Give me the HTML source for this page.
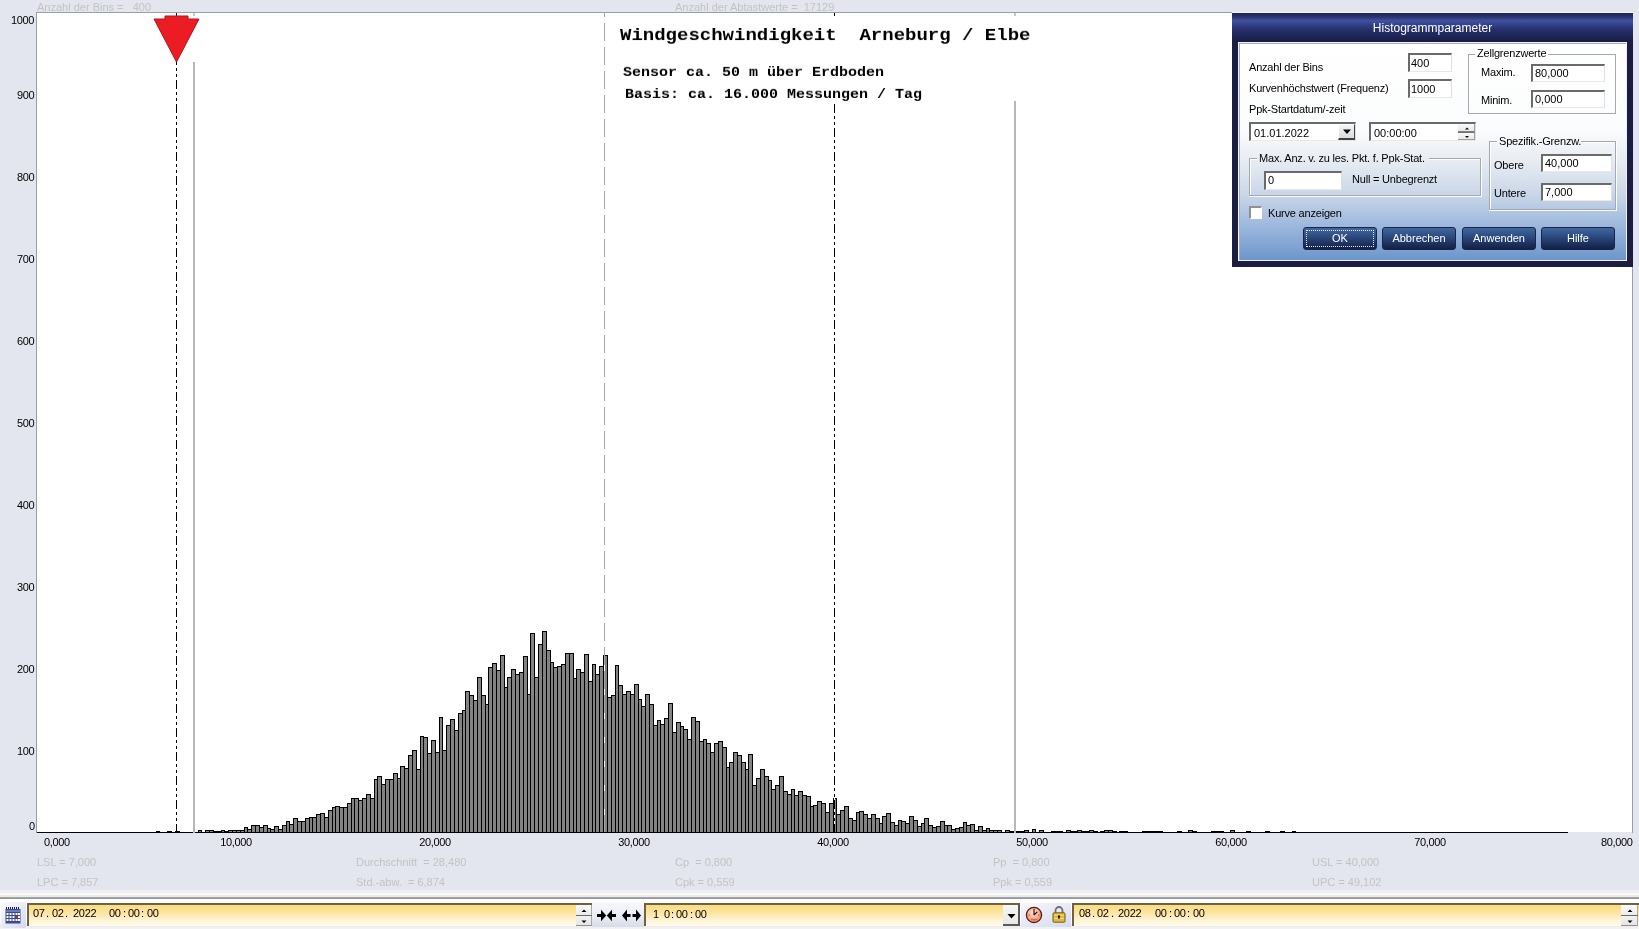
<!DOCTYPE html>
<html><head><meta charset="utf-8"><style>
html,body{margin:0;padding:0}
body{width:1639px;height:929px;position:relative;overflow:hidden;background:#e3e6ee;font-family:"Liberation Sans",sans-serif}
.t{position:absolute;line-height:1;white-space:pre;will-change:transform}
svg{position:absolute;left:0;top:0}
</style></head><body>
<svg width="1639" height="929" viewBox="0 0 1639 929" shape-rendering="crispEdges"><rect x="37" y="13" width="1595" height="819" fill="#fff"/><rect x="36" y="12" width="1" height="821" fill="#9a9ea6"/><rect x="36" y="12" width="1597" height="1" fill="#9a9ea6"/><rect x="1632" y="12" width="1" height="821" fill="#9a9ea6"/><path fill="#000" d="M156 831h4v1h-4zM167 831h5v1h-5zM175 831h5v1h-5zM198 830h4v2h-4zM205 830h5v2h-5zM209 830h5v2h-5zM213 831h5v1h-5zM217 831h5v1h-5zM221 830h4v2h-4zM224 831h5v1h-5zM228 830h5v2h-5zM232 830h5v2h-5zM236 830h5v2h-5zM240 830h5v2h-5zM244 827h4v5h-4zM247 829h5v3h-5zM251 825h5v7h-5zM255 825h5v7h-5zM259 827h5v5h-5zM263 825h5v7h-5zM267 828h4v4h-4zM270 829h5v3h-5zM274 826h5v6h-5zM278 829h5v3h-5zM282 825h5v7h-5zM286 821h4v11h-4zM289 824h5v8h-5zM293 818h5v14h-5zM297 821h5v11h-5zM301 821h5v11h-5zM305 818h5v14h-5zM309 817h4v15h-4zM312 817h5v15h-5zM316 814h5v18h-5zM320 813h5v19h-5zM324 817h5v15h-5zM328 810h5v22h-5zM332 807h4v25h-4zM335 806h5v26h-5zM339 807h5v25h-5zM343 807h5v25h-5zM347 803h5v29h-5zM351 798h4v34h-4zM354 798h5v34h-5zM358 800h5v32h-5zM362 798h5v34h-5zM366 794h5v38h-5zM370 798h5v34h-5zM374 779h4v53h-4zM377 776h5v56h-5zM381 784h5v48h-5zM385 779h5v53h-5zM389 779h5v53h-5zM393 773h5v59h-5zM397 778h4v54h-4zM400 766h5v66h-5zM404 768h5v64h-5zM408 755h5v77h-5zM412 750h5v82h-5zM416 769h5v63h-5zM420 736h4v96h-4zM423 737h5v95h-5zM427 753h5v79h-5zM431 740h5v92h-5zM435 752h5v80h-5zM439 717h4v115h-4zM442 750h5v82h-5zM446 725h5v107h-5zM450 719h5v113h-5zM454 730h5v102h-5zM458 713h5v119h-5zM462 710h4v122h-4zM465 691h5v141h-5zM469 695h5v137h-5zM473 700h5v132h-5zM477 677h5v155h-5zM481 695h5v137h-5zM485 704h4v128h-4zM488 667h5v165h-5zM492 663h5v169h-5zM496 670h5v162h-5zM500 655h5v177h-5zM504 687h4v145h-4zM507 677h5v155h-5zM511 669h5v163h-5zM515 674h5v158h-5zM519 672h5v160h-5zM523 656h5v176h-5zM527 694h4v138h-4zM530 633h5v199h-5zM534 677h5v155h-5zM538 644h5v188h-5zM542 631h5v201h-5zM546 650h5v182h-5zM550 662h4v170h-4zM553 667h5v165h-5zM557 666h5v166h-5zM561 664h5v168h-5zM565 653h5v179h-5zM569 653h5v179h-5zM573 678h4v154h-4zM576 669h5v163h-5zM580 672h5v160h-5zM584 654h5v178h-5zM588 681h5v151h-5zM592 664h4v168h-4zM595 674h5v158h-5zM599 666h5v166h-5zM603 655h5v177h-5zM607 697h5v135h-5zM611 695h5v137h-5zM615 665h4v167h-4zM618 685h5v147h-5zM622 694h5v138h-5zM626 691h5v141h-5zM630 694h5v138h-5zM634 684h5v148h-5zM638 699h4v133h-4zM641 706h5v126h-5zM645 694h5v138h-5zM649 704h5v128h-5zM653 725h5v107h-5zM657 720h4v112h-4zM660 724h5v108h-5zM664 718h5v114h-5zM668 703h5v129h-5zM672 732h5v100h-5zM676 722h5v110h-5zM680 726h4v106h-4zM683 729h5v103h-5zM687 739h5v93h-5zM691 717h5v115h-5zM695 721h5v111h-5zM699 741h5v91h-5zM703 739h4v93h-4zM706 743h5v89h-5zM710 752h5v80h-5zM714 743h5v89h-5zM718 741h5v91h-5zM722 747h5v85h-5zM726 767h4v65h-4zM729 762h5v70h-5zM733 752h5v80h-5zM737 755h5v77h-5zM741 762h5v70h-5zM745 769h4v63h-4zM748 754h5v78h-5zM752 785h5v47h-5zM756 778h5v54h-5zM760 769h5v63h-5zM764 776h5v56h-5zM768 780h4v52h-4zM771 789h5v43h-5zM775 785h5v47h-5zM779 776h5v56h-5zM783 791h5v41h-5zM787 794h5v38h-5zM791 789h4v43h-4zM794 795h5v37h-5zM798 791h5v41h-5zM802 795h5v37h-5zM806 796h5v36h-5zM810 806h4v26h-4zM813 805h5v27h-5zM817 801h5v31h-5zM821 803h5v29h-5zM825 812h5v20h-5zM829 803h5v29h-5zM833 798h4v34h-4zM836 814h5v18h-5zM840 810h5v22h-5zM844 806h5v26h-5zM848 818h5v14h-5zM852 820h5v12h-5zM856 812h4v20h-4zM859 811h5v21h-5zM863 814h5v18h-5zM867 818h5v14h-5zM871 814h5v18h-5zM875 818h5v14h-5zM879 823h4v9h-4zM882 816h5v16h-5zM886 813h5v19h-5zM890 822h5v10h-5zM894 825h5v7h-5zM898 820h4v12h-4zM901 821h5v11h-5zM905 823h5v9h-5zM909 816h5v16h-5zM913 820h5v12h-5zM917 826h5v6h-5zM921 823h4v9h-4zM924 818h5v14h-5zM928 825h5v7h-5zM932 827h5v5h-5zM936 826h5v6h-5zM940 821h5v11h-5zM944 825h4v7h-4zM947 825h5v7h-5zM951 829h5v3h-5zM955 828h5v4h-5zM959 827h5v5h-5zM963 822h4v10h-4zM966 825h5v7h-5zM970 824h5v8h-5zM974 830h5v2h-5zM978 826h5v6h-5zM982 830h5v2h-5zM986 828h4v4h-4zM989 830h5v2h-5zM993 830h5v2h-5zM997 830h5v2h-5zM1005 830h5v2h-5zM1009 831h4v1h-4zM1012 831h5v1h-5zM1016 831h5v1h-5zM1020 831h5v1h-5zM1024 830h5v2h-5zM1032 829h4v3h-4zM1039 830h5v2h-5zM1051 831h4v1h-4zM1054 831h5v1h-5zM1058 831h5v1h-5zM1066 830h5v2h-5zM1070 831h5v1h-5zM1074 831h4v1h-4zM1077 830h5v2h-5zM1081 831h5v1h-5zM1085 831h5v1h-5zM1089 830h5v2h-5zM1093 831h5v1h-5zM1100 831h5v1h-5zM1104 830h5v2h-5zM1108 830h5v2h-5zM1112 831h5v1h-5zM1119 831h5v1h-5zM1123 831h5v1h-5zM1142 831h5v1h-5zM1146 831h5v1h-5zM1150 831h5v1h-5zM1154 831h5v1h-5zM1158 831h5v1h-5zM1177 831h5v1h-5zM1188 830h5v2h-5zM1192 831h5v1h-5zM1211 831h5v1h-5zM1215 831h5v1h-5zM1219 831h5v1h-5zM1230 830h5v2h-5zM1246 831h5v1h-5zM1265 831h5v1h-5zM1280 831h5v1h-5zM1292 831h4v1h-4z"/><path fill="#838383" d="M199 831h2v1h-2zM206 831h3v1h-3zM210 831h3v1h-3zM222 831h2v1h-2zM229 831h3v1h-3zM233 831h3v1h-3zM237 831h3v1h-3zM241 831h3v1h-3zM245 828h2v4h-2zM248 830h3v2h-3zM252 826h3v6h-3zM256 826h3v6h-3zM260 828h3v4h-3zM264 826h3v6h-3zM268 829h2v3h-2zM271 830h3v2h-3zM275 827h3v5h-3zM279 830h3v2h-3zM283 826h3v6h-3zM287 822h2v10h-2zM290 825h3v7h-3zM294 819h3v13h-3zM298 822h3v10h-3zM302 822h3v10h-3zM306 819h3v13h-3zM310 818h2v14h-2zM313 818h3v14h-3zM317 815h3v17h-3zM321 814h3v18h-3zM325 818h3v14h-3zM329 811h3v21h-3zM333 808h2v24h-2zM336 807h3v25h-3zM340 808h3v24h-3zM344 808h3v24h-3zM348 804h3v28h-3zM352 799h2v33h-2zM355 799h3v33h-3zM359 801h3v31h-3zM363 799h3v33h-3zM367 795h3v37h-3zM371 799h3v33h-3zM375 780h2v52h-2zM378 777h3v55h-3zM382 785h3v47h-3zM386 780h3v52h-3zM390 780h3v52h-3zM394 774h3v58h-3zM398 779h2v53h-2zM401 767h3v65h-3zM405 769h3v63h-3zM409 756h3v76h-3zM413 751h3v81h-3zM417 770h3v62h-3zM421 737h2v95h-2zM424 738h3v94h-3zM428 754h3v78h-3zM432 741h3v91h-3zM436 753h3v79h-3zM440 718h2v114h-2zM443 751h3v81h-3zM447 726h3v106h-3zM451 720h3v112h-3zM455 731h3v101h-3zM459 714h3v118h-3zM463 711h2v121h-2zM466 692h3v140h-3zM470 696h3v136h-3zM474 701h3v131h-3zM478 678h3v154h-3zM482 696h3v136h-3zM486 705h2v127h-2zM489 668h3v164h-3zM493 664h3v168h-3zM497 671h3v161h-3zM501 656h3v176h-3zM505 688h2v144h-2zM508 678h3v154h-3zM512 670h3v162h-3zM516 675h3v157h-3zM520 673h3v159h-3zM524 657h3v175h-3zM528 695h2v137h-2zM531 634h3v198h-3zM535 678h3v154h-3zM539 645h3v187h-3zM543 632h3v200h-3zM547 651h3v181h-3zM551 663h2v169h-2zM554 668h3v164h-3zM558 667h3v165h-3zM562 665h3v167h-3zM566 654h3v178h-3zM570 654h3v178h-3zM574 679h2v153h-2zM577 670h3v162h-3zM581 673h3v159h-3zM585 655h3v177h-3zM589 682h3v150h-3zM593 665h2v167h-2zM596 675h3v157h-3zM600 667h3v165h-3zM604 656h3v176h-3zM608 698h3v134h-3zM612 696h3v136h-3zM616 666h2v166h-2zM619 686h3v146h-3zM623 695h3v137h-3zM627 692h3v140h-3zM631 695h3v137h-3zM635 685h3v147h-3zM639 700h2v132h-2zM642 707h3v125h-3zM646 695h3v137h-3zM650 705h3v127h-3zM654 726h3v106h-3zM658 721h2v111h-2zM661 725h3v107h-3zM665 719h3v113h-3zM669 704h3v128h-3zM673 733h3v99h-3zM677 723h3v109h-3zM681 727h2v105h-2zM684 730h3v102h-3zM688 740h3v92h-3zM692 718h3v114h-3zM696 722h3v110h-3zM700 742h3v90h-3zM704 740h2v92h-2zM707 744h3v88h-3zM711 753h3v79h-3zM715 744h3v88h-3zM719 742h3v90h-3zM723 748h3v84h-3zM727 768h2v64h-2zM730 763h3v69h-3zM734 753h3v79h-3zM738 756h3v76h-3zM742 763h3v69h-3zM746 770h2v62h-2zM749 755h3v77h-3zM753 786h3v46h-3zM757 779h3v53h-3zM761 770h3v62h-3zM765 777h3v55h-3zM769 781h2v51h-2zM772 790h3v42h-3zM776 786h3v46h-3zM780 777h3v55h-3zM784 792h3v40h-3zM788 795h3v37h-3zM792 790h2v42h-2zM795 796h3v36h-3zM799 792h3v40h-3zM803 796h3v36h-3zM807 797h3v35h-3zM811 807h2v25h-2zM814 806h3v26h-3zM818 802h3v30h-3zM822 804h3v28h-3zM826 813h3v19h-3zM830 804h3v28h-3zM834 799h2v33h-2zM837 815h3v17h-3zM841 811h3v21h-3zM845 807h3v25h-3zM849 819h3v13h-3zM853 821h3v11h-3zM857 813h2v19h-2zM860 812h3v20h-3zM864 815h3v17h-3zM868 819h3v13h-3zM872 815h3v17h-3zM876 819h3v13h-3zM880 824h2v8h-2zM883 817h3v15h-3zM887 814h3v18h-3zM891 823h3v9h-3zM895 826h3v6h-3zM899 821h2v11h-2zM902 822h3v10h-3zM906 824h3v8h-3zM910 817h3v15h-3zM914 821h3v11h-3zM918 827h3v5h-3zM922 824h2v8h-2zM925 819h3v13h-3zM929 826h3v6h-3zM933 828h3v4h-3zM937 827h3v5h-3zM941 822h3v10h-3zM945 826h2v6h-2zM948 826h3v6h-3zM952 830h3v2h-3zM956 829h3v3h-3zM960 828h3v4h-3zM964 823h2v9h-2zM967 826h3v6h-3zM971 825h3v7h-3zM975 831h3v1h-3zM979 827h3v5h-3zM983 831h3v1h-3zM987 829h2v3h-2zM990 831h3v1h-3zM994 831h3v1h-3zM998 831h3v1h-3zM1006 831h3v1h-3zM1025 831h3v1h-3zM1033 830h2v2h-2zM1040 831h3v1h-3zM1067 831h3v1h-3zM1078 831h3v1h-3zM1090 831h3v1h-3zM1105 831h3v1h-3zM1109 831h3v1h-3zM1189 831h3v1h-3zM1231 831h3v1h-3z"/><rect x="37" y="832" width="1531" height="1" fill="#000"/><rect x="604" y="13" width="1" height="819" fill="#fff"/><line x1="604.5" y1="13" x2="604.5" y2="832" stroke="#a8a8a8" stroke-width="1" stroke-dasharray="18 6" stroke-dashoffset="-10"/><rect x="193" y="62" width="2" height="771" fill="#b8b8b8"/><rect x="193" y="13" width="2" height="3" fill="#c8c8c8"/><rect x="1014" y="101" width="2" height="732" fill="#b8b8b8"/><rect x="1014" y="13" width="2" height="3" fill="#c8c8c8"/><rect x="176" y="62" width="1" height="770" fill="#fff"/><line x1="176.5" y1="13" x2="176.5" y2="832" stroke="#000" stroke-width="1" stroke-dasharray="9 3 3 3 3 3" stroke-dashoffset="5"/><rect x="834" y="104" width="1" height="728" fill="#fff"/><line x1="834.5" y1="104" x2="834.5" y2="832" stroke="#000" stroke-width="1" stroke-dasharray="9 3 3 3 3 3" stroke-dashoffset="-96"/><rect x="834" y="13" width="1" height="3" fill="#000"/><path d="M165 16H188V19H199L176.5 62L154 19H165Z" fill="#ec1c24" stroke="#b41418" stroke-width="1" shape-rendering="geometricPrecision"/></svg>
<div class="t" style="left:37px;top:1.69px;font-size:11px;color:#c3c3c3;font-family:'Liberation Sans',sans-serif;font-weight:normal;">Anzahl der Bins =   400</div>
<div class="t" style="left:675px;top:1.69px;font-size:11px;color:#c3c3c3;font-family:'Liberation Sans',sans-serif;font-weight:normal;">Anzahl der Abtastwerte =  17129</div>
<div class="t" style="right:1604.5px;top:820.69px;font-size:11px;color:#000;font-family:'Liberation Sans',sans-serif;font-weight:normal;text-align:right;letter-spacing:-0.35px">0</div>
<div class="t" style="right:1604.5px;top:745.69px;font-size:11px;color:#000;font-family:'Liberation Sans',sans-serif;font-weight:normal;text-align:right;letter-spacing:-0.35px">100</div>
<div class="t" style="right:1604.5px;top:663.69px;font-size:11px;color:#000;font-family:'Liberation Sans',sans-serif;font-weight:normal;text-align:right;letter-spacing:-0.35px">200</div>
<div class="t" style="right:1604.5px;top:581.69px;font-size:11px;color:#000;font-family:'Liberation Sans',sans-serif;font-weight:normal;text-align:right;letter-spacing:-0.35px">300</div>
<div class="t" style="right:1604.5px;top:499.69px;font-size:11px;color:#000;font-family:'Liberation Sans',sans-serif;font-weight:normal;text-align:right;letter-spacing:-0.35px">400</div>
<div class="t" style="right:1604.5px;top:417.69px;font-size:11px;color:#000;font-family:'Liberation Sans',sans-serif;font-weight:normal;text-align:right;letter-spacing:-0.35px">500</div>
<div class="t" style="right:1604.5px;top:335.69px;font-size:11px;color:#000;font-family:'Liberation Sans',sans-serif;font-weight:normal;text-align:right;letter-spacing:-0.35px">600</div>
<div class="t" style="right:1604.5px;top:253.69px;font-size:11px;color:#000;font-family:'Liberation Sans',sans-serif;font-weight:normal;text-align:right;letter-spacing:-0.35px">700</div>
<div class="t" style="right:1604.5px;top:171.69px;font-size:11px;color:#000;font-family:'Liberation Sans',sans-serif;font-weight:normal;text-align:right;letter-spacing:-0.35px">800</div>
<div class="t" style="right:1604.5px;top:89.69px;font-size:11px;color:#000;font-family:'Liberation Sans',sans-serif;font-weight:normal;text-align:right;letter-spacing:-0.35px">900</div>
<div class="t" style="right:1604.5px;top:14.69px;font-size:11px;color:#000;font-family:'Liberation Sans',sans-serif;font-weight:normal;text-align:right;letter-spacing:-0.35px">1000</div>
<div class="t" style="left:43.5px;top:836.69px;font-size:11px;color:#000;font-family:'Liberation Sans',sans-serif;font-weight:normal;letter-spacing:-0.35px">0,000</div>
<div class="t" style="left:135.79999999999998px;width:200px;top:836.69px;font-size:11px;color:#000;font-family:'Liberation Sans',sans-serif;font-weight:normal;text-align:center;letter-spacing:-0.35px">10,000</div>
<div class="t" style="left:334.8px;width:200px;top:836.69px;font-size:11px;color:#000;font-family:'Liberation Sans',sans-serif;font-weight:normal;text-align:center;letter-spacing:-0.35px">20,000</div>
<div class="t" style="left:533.8000000000001px;width:200px;top:836.69px;font-size:11px;color:#000;font-family:'Liberation Sans',sans-serif;font-weight:normal;text-align:center;letter-spacing:-0.35px">30,000</div>
<div class="t" style="left:732.8000000000001px;width:200px;top:836.69px;font-size:11px;color:#000;font-family:'Liberation Sans',sans-serif;font-weight:normal;text-align:center;letter-spacing:-0.35px">40,000</div>
<div class="t" style="left:931.8px;width:200px;top:836.69px;font-size:11px;color:#000;font-family:'Liberation Sans',sans-serif;font-weight:normal;text-align:center;letter-spacing:-0.35px">50,000</div>
<div class="t" style="left:1130.8px;width:200px;top:836.69px;font-size:11px;color:#000;font-family:'Liberation Sans',sans-serif;font-weight:normal;text-align:center;letter-spacing:-0.35px">60,000</div>
<div class="t" style="left:1329.8px;width:200px;top:836.69px;font-size:11px;color:#000;font-family:'Liberation Sans',sans-serif;font-weight:normal;text-align:center;letter-spacing:-0.35px">70,000</div>
<div class="t" style="right:6.2000000000000455px;top:836.69px;font-size:11px;color:#000;font-family:'Liberation Sans',sans-serif;font-weight:normal;text-align:right;letter-spacing:-0.35px">80,000</div>
<div class="t" style="left:37px;top:856.69px;font-size:11px;color:#c3c3c3;font-family:'Liberation Sans',sans-serif;font-weight:normal;">LSL = 7,000</div>
<div class="t" style="left:37px;top:876.69px;font-size:11px;color:#c3c3c3;font-family:'Liberation Sans',sans-serif;font-weight:normal;">LPC = 7,857</div>
<div class="t" style="left:356px;top:856.69px;font-size:11px;color:#c3c3c3;font-family:'Liberation Sans',sans-serif;font-weight:normal;">Durchschnitt  = 28,480</div>
<div class="t" style="left:356px;top:876.69px;font-size:11px;color:#c3c3c3;font-family:'Liberation Sans',sans-serif;font-weight:normal;">Std.-abw.  = 6,874</div>
<div class="t" style="left:675px;top:856.69px;font-size:11px;color:#c3c3c3;font-family:'Liberation Sans',sans-serif;font-weight:normal;">Cp  = 0,800</div>
<div class="t" style="left:675px;top:876.69px;font-size:11px;color:#c3c3c3;font-family:'Liberation Sans',sans-serif;font-weight:normal;">Cpk = 0,559</div>
<div class="t" style="left:993px;top:856.69px;font-size:11px;color:#c3c3c3;font-family:'Liberation Sans',sans-serif;font-weight:normal;">Pp  = 0,800</div>
<div class="t" style="left:993px;top:876.69px;font-size:11px;color:#c3c3c3;font-family:'Liberation Sans',sans-serif;font-weight:normal;">Ppk = 0,559</div>
<div class="t" style="left:1312px;top:856.69px;font-size:11px;color:#c3c3c3;font-family:'Liberation Sans',sans-serif;font-weight:normal;">USL = 40,000</div>
<div class="t" style="left:1312px;top:876.69px;font-size:11px;color:#c3c3c3;font-family:'Liberation Sans',sans-serif;font-weight:normal;">UPC = 49,102</div>
<div class="t" style="left:619.5px;top:26.24px;font-size:19px;color:#000;font-family:'Liberation Mono',sans-serif;font-weight:bold;transform:scaleY(0.93);transform-origin:0 14.56px">Windgeschwindigkeit  Arneburg / Elbe</div>
<div class="t" style="left:623px;top:65.00px;font-size:15px;color:#000;font-family:'Liberation Mono',sans-serif;font-weight:bold;transform:scaleY(0.92);transform-origin:0 11.5px">Sensor ca. 50 m über Erdboden</div>
<div class="t" style="left:625px;top:87.40px;font-size:15px;color:#000;font-family:'Liberation Mono',sans-serif;font-weight:bold;transform:scaleY(0.92);transform-origin:0 11.5px">Basis: ca. 16.000 Messungen / Tag</div>
<div style="position:absolute;left:1232px;top:12px;width:401px;height:1px;box-sizing:border-box;background:#f4f5f8"></div>
<div style="position:absolute;left:1232px;top:13px;width:401px;height:254px;box-sizing:border-box;background:#1b1d42"></div>
<div style="position:absolute;left:1232px;top:13px;width:401px;height:29px;box-sizing:border-box;background:linear-gradient(to bottom,#1c2350 0%,#2a3672 14%,#4252a0 27%,#33408a 40%,#252f68 60%,#1c2352 85%,#161b40 100%)"></div>
<div class="t" style="left:1232px;width:401px;text-align:center;top:21.84px;font-size:12px;color:#fff;">Histogrammparameter</div>
<div style="position:absolute;left:1238px;top:42px;width:389px;height:219px;box-sizing:border-box;background:linear-gradient(to bottom,#ffffff 0%,#fbfcfd 40%,#e6ebf2 55%,#c9d6e8 70%,#9ab6dc 85%,#6d96cc 100%);border:1px solid #f0f2f8;box-shadow:inset 1px 1px 0 #a8acb8"></div>
<div class="t" style="left:1249px;top:61.69px;font-size:11px;color:#000;transform:scaleY(1.07);transform-origin:0 9.31px;letter-spacing:-0.2px;">Anzahl der Bins</div>
<div class="t" style="left:1249px;top:83.09px;font-size:11px;color:#000;transform:scaleY(1.07);transform-origin:0 9.31px;letter-spacing:-0.2px;">Kurvenhöchstwert (Frequenz)</div>
<div class="t" style="left:1249px;top:103.69px;font-size:11px;color:#000;transform:scaleY(1.07);transform-origin:0 9.31px;letter-spacing:-0.2px;">Ppk-Startdatum/-zeit</div>
<div style="position:absolute;left:1408px;top:53px;width:44px;height:19px;box-sizing:border-box;background:#fff;border-top:2px solid #6a6a6a;border-left:2px solid #6a6a6a;border-right:1px solid #e0e0e0;border-bottom:1px solid #e8e8e8"></div>
<div class="t" style="left:1411px;top:58.09px;font-size:11px;color:#000;transform:scaleY(1.07);transform-origin:0 9.31px;">400</div>
<div style="position:absolute;left:1408px;top:79px;width:44px;height:19px;box-sizing:border-box;background:#fff;border-top:2px solid #6a6a6a;border-left:2px solid #6a6a6a;border-right:1px solid #e0e0e0;border-bottom:1px solid #e8e8e8"></div>
<div class="t" style="left:1411px;top:83.99px;font-size:11px;color:#000;transform:scaleY(1.07);transform-origin:0 9.31px;">1000</div>
<div style="position:absolute;left:1468px;top:54px;width:7px;height:1px;box-sizing:border-box;background:#a4a8b0"></div>
<div style="position:absolute;left:1469px;top:55px;width:6px;height:1px;box-sizing:border-box;background:rgba(255,255,255,0.9)"></div>
<div style="position:absolute;left:1548px;top:54px;width:68px;height:1px;box-sizing:border-box;background:#a4a8b0"></div>
<div style="position:absolute;left:1548px;top:55px;width:68px;height:1px;box-sizing:border-box;background:rgba(255,255,255,0.9)"></div>
<div style="position:absolute;left:1468px;top:54px;width:1px;height:60px;box-sizing:border-box;background:#a4a8b0"></div>
<div style="position:absolute;left:1469px;top:55px;width:1px;height:58px;box-sizing:border-box;background:rgba(255,255,255,0.9)"></div>
<div style="position:absolute;left:1615px;top:54px;width:1px;height:60px;box-sizing:border-box;background:#a4a8b0"></div>
<div style="position:absolute;left:1616px;top:54px;width:1px;height:61px;box-sizing:border-box;background:rgba(255,255,255,0.9)"></div>
<div style="position:absolute;left:1468px;top:113px;width:148px;height:1px;box-sizing:border-box;background:#a4a8b0"></div>
<div style="position:absolute;left:1468px;top:114px;width:149px;height:1px;box-sizing:border-box;background:rgba(255,255,255,0.9)"></div>
<div class="t" style="left:1476.5px;top:48.49px;font-size:11px;color:#000;transform:scaleY(1.07);transform-origin:0 9.31px;letter-spacing:-0.2px;">Zellgrenzwerte</div>
<div class="t" style="left:1481px;top:67.39px;font-size:11px;color:#000;transform:scaleY(1.07);transform-origin:0 9.31px;letter-spacing:-0.2px;">Maxim.</div>
<div style="position:absolute;left:1531px;top:64px;width:74px;height:18px;box-sizing:border-box;background:#fff;border-top:2px solid #6a6a6a;border-left:2px solid #6a6a6a;border-right:1px solid #e0e0e0;border-bottom:1px solid #e8e8e8"></div>
<div class="t" style="left:1534.5px;top:67.89px;font-size:11px;color:#000;transform:scaleY(1.07);transform-origin:0 9.31px;">80,000</div>
<div class="t" style="left:1481px;top:95.19px;font-size:11px;color:#000;transform:scaleY(1.07);transform-origin:0 9.31px;letter-spacing:-0.2px;">Minim.</div>
<div style="position:absolute;left:1531px;top:90px;width:74px;height:18px;box-sizing:border-box;background:#fff;border-top:2px solid #6a6a6a;border-left:2px solid #6a6a6a;border-right:1px solid #e0e0e0;border-bottom:1px solid #e8e8e8"></div>
<div class="t" style="left:1534.5px;top:93.69px;font-size:11px;color:#000;transform:scaleY(1.07);transform-origin:0 9.31px;">0,000</div>
<div style="position:absolute;left:1249px;top:122px;width:107px;height:19px;box-sizing:border-box;background:#fff;border-top:2px solid #6a6a6a;border-left:2px solid #6a6a6a;border-right:1px solid #e0e0e0;border-bottom:1px solid #e8e8e8"></div>
<div style="position:absolute;left:1338px;top:124px;width:17px;height:16px;box-sizing:border-box;background:linear-gradient(#f4f4f4,#dcdcdc);border-right:1px solid #404040;border-bottom:2px solid #404040;border-left:1px solid #fff;border-top:1px solid #fff"></div>
<svg style="position:absolute;left:1341px;top:128px" width="12" height="8"><path d="M2 1.5H10L6 6Z" fill="#000"/></svg>
<div class="t" style="left:1253.5px;top:128.19px;font-size:11px;color:#000;transform:scaleY(1.07);transform-origin:0 9.31px;">01.01.2022</div>
<div style="position:absolute;left:1369px;top:122px;width:107px;height:19px;box-sizing:border-box;background:#fff;border-top:2px solid #6a6a6a;border-left:2px solid #6a6a6a;border-right:1px solid #e0e0e0;border-bottom:1px solid #e8e8e8"></div>
<div class="t" style="left:1373.5px;top:128.19px;font-size:11px;color:#000;transform:scaleY(1.07);transform-origin:0 9.31px;">00:00:00</div>
<div style="position:absolute;left:1458px;top:124px;width:17px;height:8px;box-sizing:border-box;background:linear-gradient(#fafafa,#e8e8e8);border-bottom:1px solid #808080;border-right:1px solid #a0a0a0"></div>
<div style="position:absolute;left:1458px;top:132px;width:17px;height:8px;box-sizing:border-box;background:linear-gradient(#fafafa,#e8e8e8);border-bottom:1px solid #a0a0a0;border-right:1px solid #a0a0a0;border-top:1px solid #707070"></div>
<svg style="position:absolute;left:1463px;top:126px" width="8" height="14"><path d="M2 3.5H6L4 1.5Z M2 10H6L4 12Z" fill="#000"/></svg>
<div style="position:absolute;left:1489px;top:141px;width:8px;height:1px;box-sizing:border-box;background:#a4a8b0"></div>
<div style="position:absolute;left:1490px;top:142px;width:7px;height:1px;box-sizing:border-box;background:rgba(255,255,255,0.9)"></div>
<div style="position:absolute;left:1581px;top:141px;width:35px;height:1px;box-sizing:border-box;background:#a4a8b0"></div>
<div style="position:absolute;left:1581px;top:142px;width:35px;height:1px;box-sizing:border-box;background:rgba(255,255,255,0.9)"></div>
<div style="position:absolute;left:1489px;top:141px;width:1px;height:69px;box-sizing:border-box;background:#a4a8b0"></div>
<div style="position:absolute;left:1490px;top:142px;width:1px;height:67px;box-sizing:border-box;background:rgba(255,255,255,0.9)"></div>
<div style="position:absolute;left:1615px;top:141px;width:1px;height:69px;box-sizing:border-box;background:#a4a8b0"></div>
<div style="position:absolute;left:1616px;top:141px;width:1px;height:70px;box-sizing:border-box;background:rgba(255,255,255,0.9)"></div>
<div style="position:absolute;left:1489px;top:209px;width:127px;height:1px;box-sizing:border-box;background:#a4a8b0"></div>
<div style="position:absolute;left:1489px;top:210px;width:128px;height:1px;box-sizing:border-box;background:rgba(255,255,255,0.9)"></div>
<div class="t" style="left:1498.5px;top:136.09px;font-size:11px;color:#000;transform:scaleY(1.07);transform-origin:0 9.31px;letter-spacing:-0.2px;">Spezifik.-Grenzw.</div>
<div class="t" style="left:1493.5px;top:159.99px;font-size:11px;color:#000;transform:scaleY(1.07);transform-origin:0 9.31px;letter-spacing:-0.2px;">Obere</div>
<div style="position:absolute;left:1541px;top:154px;width:71px;height:18px;box-sizing:border-box;background:#fff;border-top:2px solid #6a6a6a;border-left:2px solid #6a6a6a;border-right:1px solid #e0e0e0;border-bottom:1px solid #e8e8e8"></div>
<div class="t" style="left:1545px;top:157.89px;font-size:11px;color:#000;transform:scaleY(1.07);transform-origin:0 9.31px;">40,000</div>
<div class="t" style="left:1493.5px;top:188.39px;font-size:11px;color:#000;transform:scaleY(1.07);transform-origin:0 9.31px;letter-spacing:-0.2px;">Untere</div>
<div style="position:absolute;left:1541px;top:183px;width:71px;height:18px;box-sizing:border-box;background:#fff;border-top:2px solid #6a6a6a;border-left:2px solid #6a6a6a;border-right:1px solid #e0e0e0;border-bottom:1px solid #e8e8e8"></div>
<div class="t" style="left:1545px;top:186.69px;font-size:11px;color:#000;transform:scaleY(1.07);transform-origin:0 9.31px;">7,000</div>
<div style="position:absolute;left:1249px;top:158px;width:8px;height:1px;box-sizing:border-box;background:#a4a8b0"></div>
<div style="position:absolute;left:1250px;top:159px;width:7px;height:1px;box-sizing:border-box;background:rgba(255,255,255,0.9)"></div>
<div style="position:absolute;left:1429px;top:158px;width:52px;height:1px;box-sizing:border-box;background:#a4a8b0"></div>
<div style="position:absolute;left:1429px;top:159px;width:52px;height:1px;box-sizing:border-box;background:rgba(255,255,255,0.9)"></div>
<div style="position:absolute;left:1249px;top:158px;width:1px;height:38px;box-sizing:border-box;background:#a4a8b0"></div>
<div style="position:absolute;left:1250px;top:159px;width:1px;height:36px;box-sizing:border-box;background:rgba(255,255,255,0.9)"></div>
<div style="position:absolute;left:1480px;top:158px;width:1px;height:38px;box-sizing:border-box;background:#a4a8b0"></div>
<div style="position:absolute;left:1481px;top:158px;width:1px;height:39px;box-sizing:border-box;background:rgba(255,255,255,0.9)"></div>
<div style="position:absolute;left:1249px;top:195px;width:232px;height:1px;box-sizing:border-box;background:#a4a8b0"></div>
<div style="position:absolute;left:1249px;top:196px;width:233px;height:1px;box-sizing:border-box;background:rgba(255,255,255,0.9)"></div>
<div class="t" style="left:1258.5px;top:152.89px;font-size:11px;color:#000;transform:scaleY(1.07);transform-origin:0 9.31px;letter-spacing:-0.2px;">Max. Anz. v. zu les. Pkt. f. Ppk-Stat.</div>
<div style="position:absolute;left:1264px;top:171px;width:78px;height:19px;box-sizing:border-box;background:#fff;border-top:2px solid #6a6a6a;border-left:2px solid #6a6a6a;border-right:1px solid #e0e0e0;border-bottom:1px solid #e8e8e8"></div>
<div class="t" style="left:1267.5px;top:174.69px;font-size:11px;color:#000;transform:scaleY(1.07);transform-origin:0 9.31px;">0</div>
<div class="t" style="left:1351.5px;top:173.79px;font-size:11px;color:#000;transform:scaleY(1.07);transform-origin:0 9.31px;letter-spacing:-0.2px;">Null = Unbegrenzt</div>
<div style="position:absolute;left:1249px;top:206px;width:13px;height:13px;box-sizing:border-box;background:#fdfdfd;border-top:2px solid #909090;border-left:2px solid #909090;border-right:1px solid #fff;border-bottom:1px solid #fff"></div>
<div class="t" style="left:1268px;top:207.69px;font-size:11px;color:#000;transform:scaleY(1.07);transform-origin:0 9.31px;letter-spacing:-0.2px;">Kurve anzeigen</div>
<div style="position:absolute;left:1303px;top:227px;width:74px;height:23px;box-sizing:border-box;background:linear-gradient(to bottom,#41679e 0%,#2f4f84 35%,#1f3564 70%,#151f44 100%);border-radius:3px;border:1px solid #1a2448"></div>
<div class="t" style="left:1303px;width:74px;text-align:center;top:233.49px;font-size:11px;color:#fff;">OK</div>
<div style="position:absolute;left:1306px;top:230px;width:68px;height:17px;box-sizing:border-box;border:1px dotted #e8e8e8"></div>
<div style="position:absolute;left:1382px;top:227px;width:74px;height:23px;box-sizing:border-box;background:linear-gradient(to bottom,#41679e 0%,#2f4f84 35%,#1f3564 70%,#151f44 100%);border-radius:3px;border:1px solid #1a2448"></div>
<div class="t" style="left:1382px;width:74px;text-align:center;top:233.49px;font-size:11px;color:#fff;">Abbrechen</div>
<div style="position:absolute;left:1462px;top:227px;width:74px;height:23px;box-sizing:border-box;background:linear-gradient(to bottom,#41679e 0%,#2f4f84 35%,#1f3564 70%,#151f44 100%);border-radius:3px;border:1px solid #1a2448"></div>
<div class="t" style="left:1462px;width:74px;text-align:center;top:233.49px;font-size:11px;color:#fff;">Anwenden</div>
<div style="position:absolute;left:1541px;top:227px;width:74px;height:23px;box-sizing:border-box;background:linear-gradient(to bottom,#41679e 0%,#2f4f84 35%,#1f3564 70%,#151f44 100%);border-radius:3px;border:1px solid #1a2448"></div>
<div class="t" style="left:1541px;width:74px;text-align:center;top:233.49px;font-size:11px;color:#fff;">Hilfe</div>
<div style="position:absolute;left:0px;top:890px;width:1639px;height:3px;box-sizing:border-box;background:#eceef0"></div>
<div style="position:absolute;left:0px;top:893px;width:1639px;height:2px;box-sizing:border-box;background:#fafafa"></div>
<div style="position:absolute;left:0px;top:895px;width:1639px;height:2px;box-sizing:border-box;background:#ebece9"></div>
<div style="position:absolute;left:0px;top:897px;width:1639px;height:2px;box-sizing:border-box;background:linear-gradient(#a8aaae,#8e9096)"></div>
<div style="position:absolute;left:0px;top:899px;width:1639px;height:30px;box-sizing:border-box;background:linear-gradient(#fefefe 0%,#fcfcfc 80%,#e8eae8 88%,#f4f4f4 100%)"></div>
<div style="position:absolute;left:1px;top:902px;width:25px;height:26px;box-sizing:border-box;background:linear-gradient(135deg,#fbfbfd 0%,#e8ebf6 50%,#d5d9ee 100%);border-radius:2px"></div>
<svg style="position:absolute;left:5px;top:907px" width="16" height="17" viewBox="0 0 16 17">
<rect x="0.5" y="2" width="15" height="14.5" fill="#3c4a88"/>
<rect x="1" y="3" width="14" height="2" fill="#6a7cc0"/>
<g fill="#1a1a40"><rect x="1" y="0" width="1" height="2"/><rect x="3" y="0" width="1" height="2"/><rect x="5" y="0" width="1" height="2"/><rect x="7" y="0" width="1" height="2"/><rect x="9" y="0" width="1" height="2"/><rect x="11" y="0" width="1" height="2"/><rect x="13" y="0" width="1" height="2"/></g>
<g fill="#f4f6ff"><rect x="1.5" y="6" width="2" height="2"/><rect x="4.5" y="6" width="2" height="2"/><rect x="7.5" y="6" width="2" height="2"/><rect x="10.5" y="6" width="2" height="2"/><rect x="13" y="6" width="2" height="2"/>
<rect x="1.5" y="9" width="2" height="2"/><rect x="4.5" y="9" width="2" height="2"/><rect x="7.5" y="9" width="2" height="2"/><rect x="13" y="9" width="2" height="2"/>
<rect x="1.5" y="12" width="2" height="2"/><rect x="4.5" y="12" width="2" height="2"/><rect x="7.5" y="12" width="2" height="2"/><rect x="10.5" y="12" width="2" height="2"/><rect x="13" y="12" width="2" height="2"/></g>
<rect x="10.5" y="9" width="2" height="2" fill="#d02020"/>
</svg>
<div style="position:absolute;left:27px;top:903px;width:565px;height:23px;box-sizing:border-box;background:linear-gradient(to bottom,#f8dc86 0%,#fbe08e 20%,#fde9b4 50%,#fef4d8 75%,#fffbee 100%);border-top:2px solid #6e6242;border-left:2px solid #6e6242"></div>
<div style="position:absolute;left:576px;top:905px;width:16px;height:10px;box-sizing:border-box;background:linear-gradient(#fafafa,#ececec);border-right:1px solid #a8a8a8"></div>
<div style="position:absolute;left:576px;top:915px;width:16px;height:1px;box-sizing:border-box;background:#6a6a6a"></div>
<div style="position:absolute;left:576px;top:916px;width:16px;height:10px;box-sizing:border-box;background:linear-gradient(#f2f2f2,#e6e6e6);border-right:1px solid #a8a8a8;border-bottom:1px solid #909090"></div>
<svg style="position:absolute;left:580.0px;top:906px" width="8" height="20"><path d="M1.5 6H6.5L4 3.5Z M1.5 14.5H6.5L4 17Z" fill="#000"/></svg>
<div class="t" style="left:32.8px;top:908.29px;font-size:11px;color:#000;letter-spacing:-0.3px">07</div>
<div class="t" style="left:46.4px;top:908.29px;font-size:11px;color:#000;letter-spacing:-0.3px">.</div>
<div class="t" style="left:51.5px;top:908.29px;font-size:11px;color:#000;letter-spacing:-0.3px">02</div>
<div class="t" style="left:65.19999999999999px;top:908.29px;font-size:11px;color:#000;letter-spacing:-0.3px">.</div>
<div class="t" style="left:72.6px;top:908.29px;font-size:11px;color:#000;letter-spacing:-0.3px">2022</div>
<div class="t" style="left:109.0px;top:908.29px;font-size:11px;color:#000;letter-spacing:-0.3px">00</div>
<div class="t" style="left:122.7px;top:908.29px;font-size:11px;color:#000;letter-spacing:-0.3px">:</div>
<div class="t" style="left:128.0px;top:908.29px;font-size:11px;color:#000;letter-spacing:-0.3px">00</div>
<div class="t" style="left:141.3px;top:908.29px;font-size:11px;color:#000;letter-spacing:-0.3px">:</div>
<div class="t" style="left:146.7px;top:908.29px;font-size:11px;color:#000;letter-spacing:-0.3px">00</div>
<div style="position:absolute;left:592px;top:902px;width:52px;height:25px;box-sizing:border-box;background:linear-gradient(to bottom,#f8f9fc 0%,#eceef6 50%,#d8dce8 100%)"></div>
<svg style="position:absolute;left:596px;top:909px" width="46" height="13" viewBox="0 0 46 13">
<path d="M1 5H5V0.8L10.2 6.5L5 12.2V8H1Z" fill="#000"/>
<path d="M20 5H16V0.8L10.8 6.5L16 12.2V8H20Z" fill="#000"/>
<path d="M26 6.5L31 0.5V5H34.5V8H31V12.5Z" fill="#000"/>
<path d="M45 6.5L40 0.5V5H36.5V8H40V12.5Z" fill="#000"/>
</svg>
<div style="position:absolute;left:644px;top:903px;width:376px;height:23px;box-sizing:border-box;background:linear-gradient(to bottom,#f8dc86 0%,#fbe08e 20%,#fde9b4 50%,#fef4d8 75%,#fffbee 100%);border-top:2px solid #6e6242;border-left:2px solid #6e6242"></div>
<div class="t" style="left:652.8px;top:908.69px;font-size:11px;color:#000;letter-spacing:-0.3px">1</div>
<div class="t" style="left:664.0px;top:908.69px;font-size:11px;color:#000;letter-spacing:-0.3px">0</div>
<div class="t" style="left:671.0999999999999px;top:908.69px;font-size:11px;color:#000;letter-spacing:-0.3px">:</div>
<div class="t" style="left:676.1999999999999px;top:908.69px;font-size:11px;color:#000;letter-spacing:-0.3px">00</div>
<div class="t" style="left:690.1999999999999px;top:908.69px;font-size:11px;color:#000;letter-spacing:-0.3px">:</div>
<div class="t" style="left:695.3px;top:908.69px;font-size:11px;color:#000;letter-spacing:-0.3px">00</div>
<div style="position:absolute;left:1003px;top:904px;width:17px;height:22px;box-sizing:border-box;background:linear-gradient(#f6f6f6,#e8e8e8);border-right:2px solid #5a5a5a;border-bottom:2px solid #5a5a5a;border-top:1px solid #6e6242"></div>
<svg style="position:absolute;left:1007px;top:913px" width="9" height="6"><path d="M0.5 1H8.5L4.5 5.5Z" fill="#000"/></svg>
<div style="position:absolute;left:1021px;top:903px;width:50px;height:24px;box-sizing:border-box;background:linear-gradient(160deg,#f6f7fc 0%,#e6e9f6 50%,#d4dcee 100%)"></div>
<svg style="position:absolute;left:1025px;top:906px" width="18" height="18" viewBox="0 0 18 18">
<defs><radialGradient id="cg" cx="0.45" cy="0.35" r="0.7"><stop offset="0" stop-color="#fde4d4"/><stop offset="0.6" stop-color="#f6a888"/><stop offset="1" stop-color="#e86a4c"/></radialGradient></defs>
<circle cx="9" cy="9" r="7.6" fill="url(#cg)" stroke="#5a1a10" stroke-width="1.3"/>
<path d="M9 9V2.8M9 9L12.2 5.8" stroke="#2a0a08" stroke-width="1.1" fill="none"/>
<circle cx="4.2" cy="9" r="0.6" fill="#5a1a10"/><circle cx="13.8" cy="9" r="0.6" fill="#5a1a10"/><circle cx="9" cy="13.8" r="0.6" fill="#5a1a10"/><circle cx="7" cy="13.2" r="0.5" fill="#5a1a10"/><circle cx="11" cy="13.2" r="0.5" fill="#5a1a10"/>
</svg>
<svg style="position:absolute;left:1052px;top:906px" width="14" height="17" viewBox="0 0 14 17">
<path d="M3.5 7V4.5A3.5 3.5 0 0 1 10.5 4.5V7" stroke="#707070" stroke-width="1.8" fill="none"/>
<rect x="1" y="6.8" width="12" height="9.4" rx="1" fill="#e2b83a" stroke="#7a5a10" stroke-width="1"/>
<rect x="2" y="8.6" width="10" height="1" fill="#f8e088"/><rect x="2" y="12" width="10" height="1" fill="#f8e088"/>
<path d="M7 9.2A1.2 1.2 0 1 1 6.99 9.2Z" fill="#201000"/><rect x="6.4" y="10" width="1.2" height="3" fill="#201000"/>
</svg>
<div style="position:absolute;left:1072px;top:903px;width:567px;height:23px;box-sizing:border-box;background:linear-gradient(to bottom,#f8dc86 0%,#fbe08e 20%,#fde9b4 50%,#fef4d8 75%,#fffbee 100%);border-top:2px solid #6e6242;border-left:2px solid #6e6242"></div>
<div style="position:absolute;left:1621px;top:905px;width:17px;height:10px;box-sizing:border-box;background:linear-gradient(#fafafa,#ececec);border-right:1px solid #a8a8a8"></div>
<div style="position:absolute;left:1621px;top:915px;width:17px;height:1px;box-sizing:border-box;background:#6a6a6a"></div>
<div style="position:absolute;left:1621px;top:916px;width:17px;height:10px;box-sizing:border-box;background:linear-gradient(#f2f2f2,#e6e6e6);border-right:1px solid #a8a8a8;border-bottom:1px solid #909090"></div>
<svg style="position:absolute;left:1625.5px;top:906px" width="8" height="20"><path d="M1.5 6H6.5L4 3.5Z M1.5 14.5H6.5L4 17Z" fill="#000"/></svg>
<div class="t" style="left:1078.6px;top:908.29px;font-size:11px;color:#000;letter-spacing:-0.3px">08</div>
<div class="t" style="left:1092.1999999999998px;top:908.29px;font-size:11px;color:#000;letter-spacing:-0.3px">.</div>
<div class="t" style="left:1097.3px;top:908.29px;font-size:11px;color:#000;letter-spacing:-0.3px">02</div>
<div class="t" style="left:1111.0px;top:908.29px;font-size:11px;color:#000;letter-spacing:-0.3px">.</div>
<div class="t" style="left:1118.3999999999999px;top:908.29px;font-size:11px;color:#000;letter-spacing:-0.3px">2022</div>
<div class="t" style="left:1154.8px;top:908.29px;font-size:11px;color:#000;letter-spacing:-0.3px">00</div>
<div class="t" style="left:1168.5px;top:908.29px;font-size:11px;color:#000;letter-spacing:-0.3px">:</div>
<div class="t" style="left:1173.8px;top:908.29px;font-size:11px;color:#000;letter-spacing:-0.3px">00</div>
<div class="t" style="left:1187.1px;top:908.29px;font-size:11px;color:#000;letter-spacing:-0.3px">:</div>
<div class="t" style="left:1192.5px;top:908.29px;font-size:11px;color:#000;letter-spacing:-0.3px">00</div>
</body></html>
